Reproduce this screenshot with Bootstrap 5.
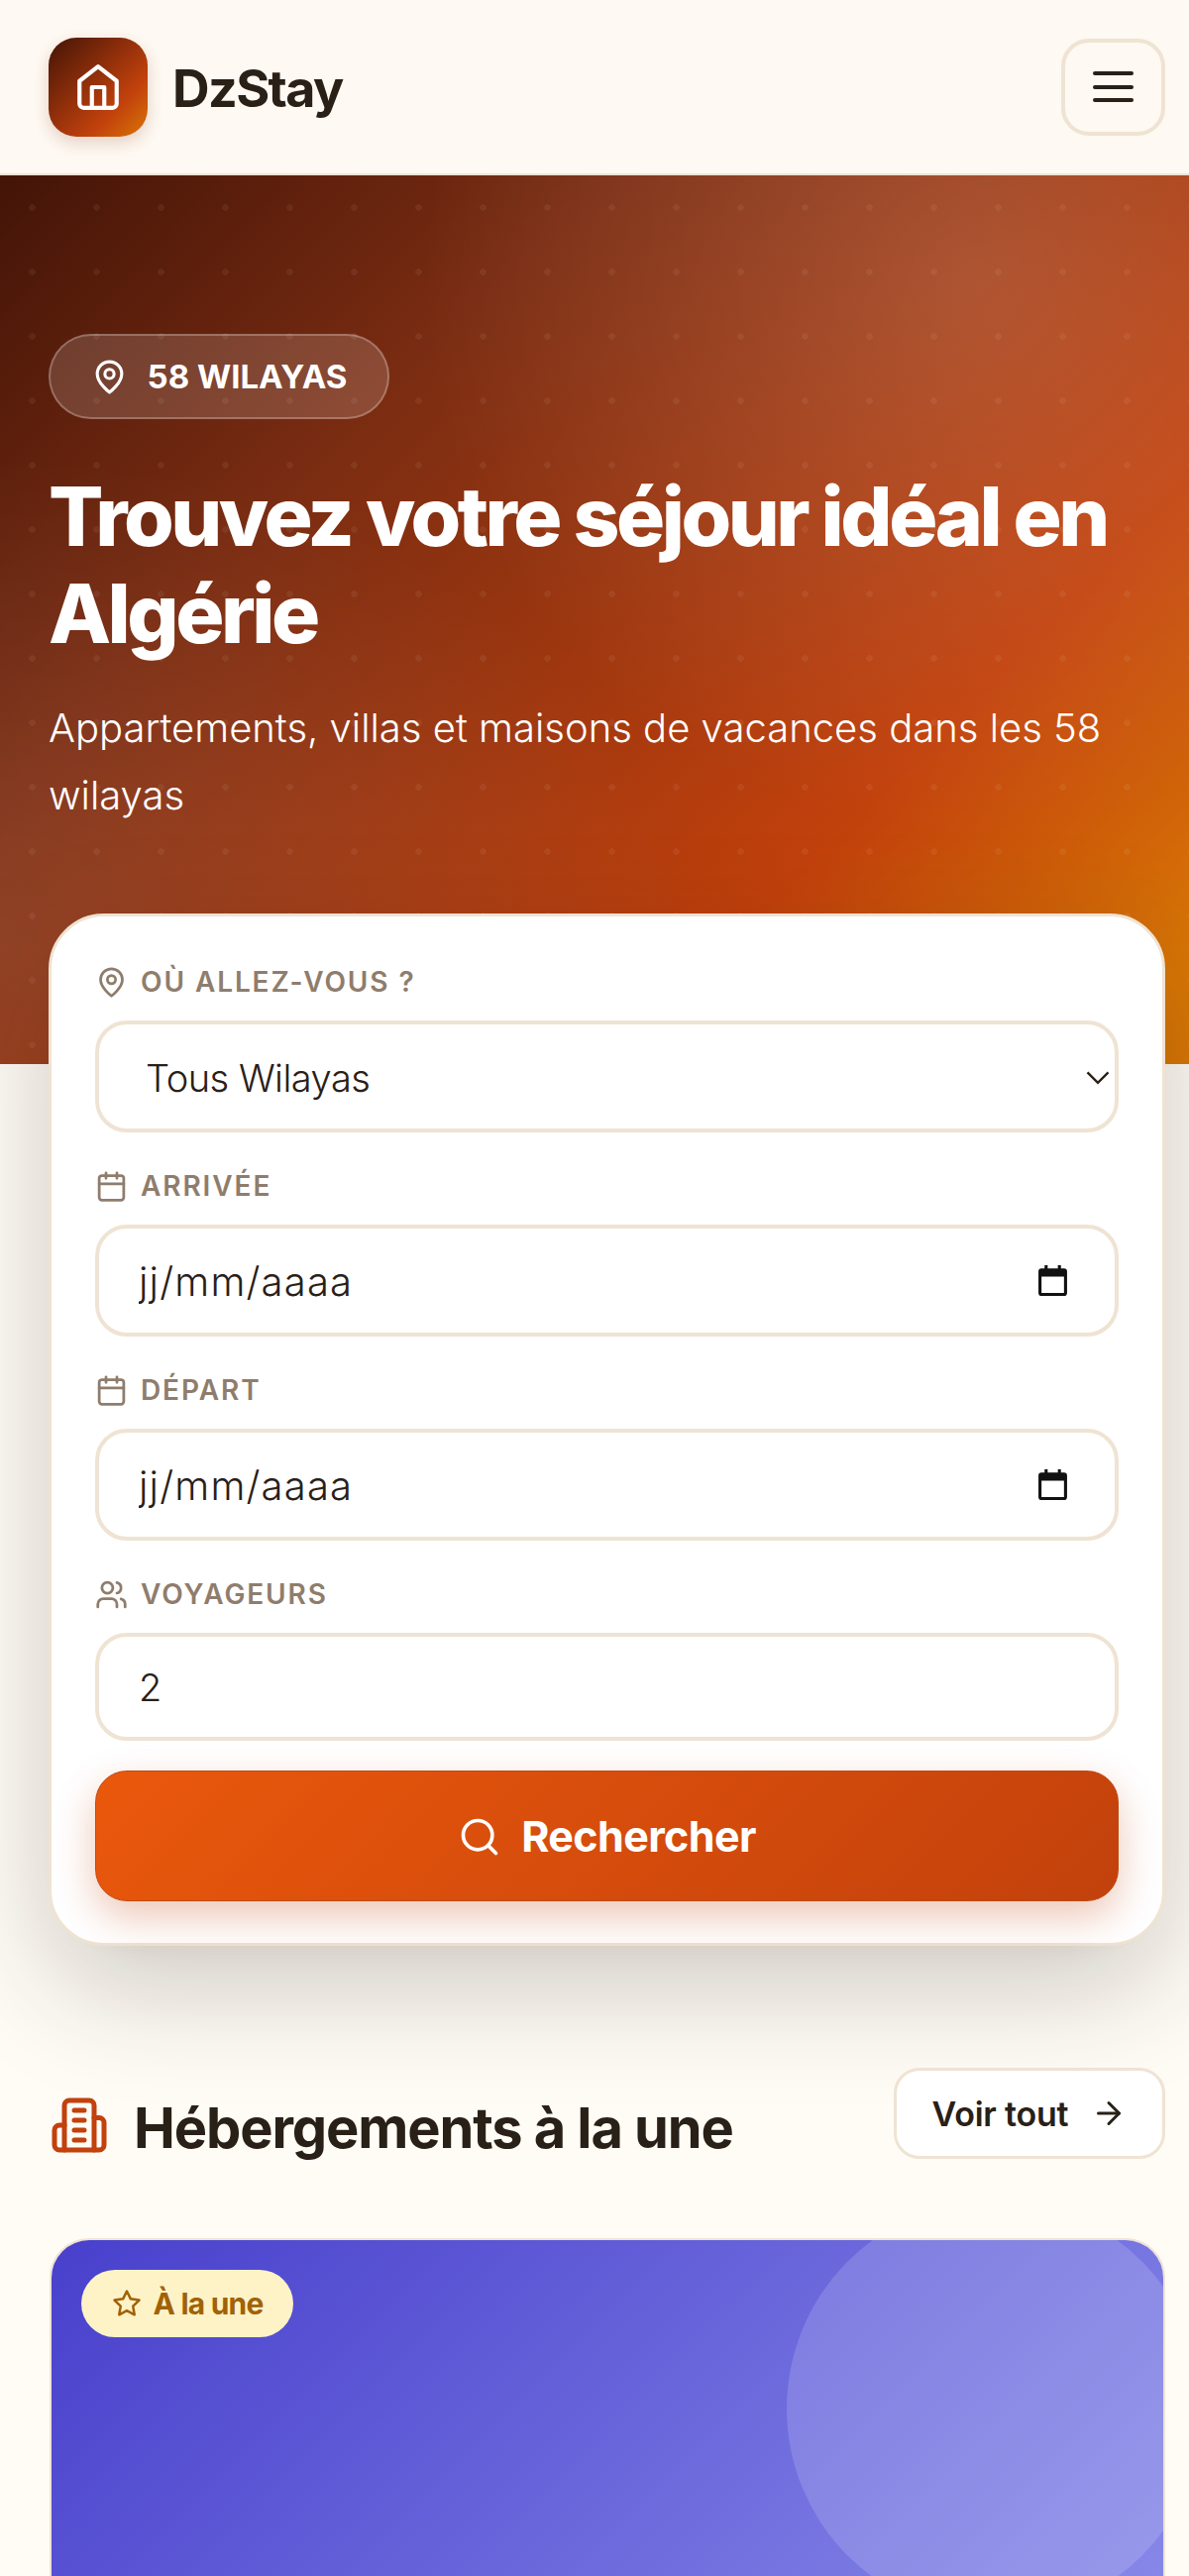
<!DOCTYPE html>
<html lang="fr">
  <head>
    <meta charset="UTF-8" />
    <meta name="viewport" content="width=device-width, initial-scale=1.0" />
    <title>DzStay</title>
    <link
      href="https://cdn.jsdelivr.net/npm/bootstrap@5.3.5/dist/css/bootstrap.min.css"
      rel="stylesheet"
    />
    <style>
      body {
        background: #fffcf6;
        color: #292017;
        font-family: "Inter", "Liberation Sans", sans-serif;
      }

      .page-clip {
        height: 2600px;
        overflow: hidden;
      }

      .top-bar {
        background: #fef9f2;
        border-bottom: 2px solid #efe3d3;
        height: 177px;
        padding: 0 24px 0 49px;
      }

      .logo-box {
        width: 100px;
        height: 100px;
        border-radius: 28px;
        background: linear-gradient(135deg, #431407 0%, #c2410c 70%, #d97706 100%);
        box-shadow: 0 6px 16px rgba(124, 45, 18, 0.2);
      }

      .logo-name {
        font-size: 52px;
        font-weight: 700;
        letter-spacing: -1.6px;
        margin: 4px 0 0 25px;
      }

      .menu-btn {
        width: 105px;
        height: 98px;
        border: 4px solid #efe3d3;
        border-radius: 28px;
        background: transparent;
        gap: 9.5px;
      }

      .menu-line {
        width: 41px;
        height: 4px;
        border-radius: 3px;
        background: #292017;
      }

      .hero-band {
        height: 897px;
        padding: 160px 24px 0 49px;
        color: #fff;
        background-image: radial-gradient(circle at 32.5px 32.5px, rgba(255, 255, 255, 0.06) 3px, transparent 3.5px),
          radial-gradient(ellipse 560px 560px at 983px 106px, rgba(255, 255, 255, 0.15), transparent),
          radial-gradient(ellipse 700px 500px at 0 780px, rgba(255, 255, 255, 0.09), transparent),
          linear-gradient(135deg, #431407 0%, #7c2d12 30%, #c2410c 72%, #d97706 95%);
        background-size: 65px 65px, auto, auto, auto;
      }

      .area-pill {
        width: 344px;
        height: 86px;
        border-radius: 43px;
        background: rgba(255, 255, 255, 0.15);
        border: 2px solid rgba(255, 255, 255, 0.25);
        font-size: 33px;
        font-weight: 700;
        gap: 20px;
      }

      .area-pill span {
        padding-top: 2px;
      }

      .hero-title {
        font-size: 82px;
        font-weight: 800;
        line-height: 98px;
        letter-spacing: -3.5px;
        margin: 50px 0 0;
      }

      .hero-sub {
        font-size: 40px;
        font-weight: 300;
        line-height: 68px;
        margin: 32px 0 0;
      }

      .search-box {
        margin: -152px 24px 0 49px;
        height: 1042px;
        position: relative;
        background: #fff;
        border: 3px solid #efe3d3;
        border-radius: 56px;
        padding: 51px 44px 0;
        box-shadow: 0 40px 120px rgba(30, 20, 10, 0.22);
      }

      .field-label {
        color: #8f7d6c;
        font-size: 28px;
        font-weight: 600;
        letter-spacing: 1.9px;
        height: 30px;
        margin-bottom: 24px;
        gap: 13px;
      }

      .field-input.form-control,
      .field-input.form-select {
        height: 113px;
        border: 4px solid #efe3d3;
        border-radius: 32px;
        font-size: 38px;
        font-weight: 300;
        color: #292017;
        padding: 0 40px;
        letter-spacing: -0.5px;
        margin-bottom: 39px;
      }

      .field-input.form-select {
        padding: 3px 40px 0 47px;
        background-image: url("data:image/svg+xml,%3Csvg xmlns='http://www.w3.org/2000/svg' viewBox='0 0 24 24' fill='none' stroke='%23292017' stroke-width='2'%3E%3Cpath d='m3 8 9 9 9-9'/%3E%3C/svg%3E");
        background-position: right 3px center;
        background-size: 28px 28px;
      }

      .field-input.date-field {
        padding: 2px 40px 0;
        font-size: 40px;
        letter-spacing: 1.2px;
        background: #fff url("data:image/svg+xml,%3Csvg xmlns='http://www.w3.org/2000/svg' viewBox='0 0 32 32'%3E%3Cpath fill='%23111' fill-rule='evenodd' d='M8 1h3v3h10V1h3v3h3a3 3 0 0 1 3 3v21a3 3 0 0 1-3 3H5a3 3 0 0 1-3-3V7a3 3 0 0 1 3-3h3zM5 12v16h22V12z'/%3E%3C/svg%3E") no-repeat right 46px center / 33px 33px;
      }

      .field-input.guest-field {
        height: 109px;
        margin-bottom: 30px;
      }

      .go-btn {
        height: 132px;
        width: 100%;
        padding-top: 2px;
        border: 1px solid #bf4a12;
        border-radius: 32px;
        color: #fff;
        font-size: 43px;
        font-weight: 700;
        letter-spacing: -0.6px;
        gap: 20px;
        background: linear-gradient(135deg, #ea580c, #c2410c);
        box-shadow: 0 16px 40px rgba(194, 65, 12, 0.3);
      }

      .section-head {
        height: 92px;
        padding: 0 24px 0 50px;
        margin-top: 123px;
        position: relative;
      }

      .title-wrap {
        padding-top: 20px;
      }

      .section-title {
        font-size: 56px;
        font-weight: 700;
        letter-spacing: -1.1px;
        margin: 0 0 0 25px;
        padding-top: 8px;
      }

      .see-all {
        width: 274px;
        height: 92px;
        border: 3px solid #efe3d3;
        border-radius: 26px;
        background: #fff;
        color: #292017;
        font-size: 34px;
        font-weight: 600;
        letter-spacing: -0.2px;
        gap: 23px;
      }

      .stay-card {
        margin: 80px 24px 0 50px;
        border: 2px solid #efe3d3;
        border-radius: 40px;
        overflow: hidden;
      }

      .stay-photo {
        height: 440px;
        position: relative;
        overflow: hidden;
        background: linear-gradient(135deg, #4840cc, #8a8cea);
      }

      .stay-photo::after {
        content: "";
        position: absolute;
        top: -40px;
        right: -40px;
        width: 420px;
        height: 420px;
        border-radius: 50%;
        background: rgba(255, 255, 255, 0.15);
      }

      .star-tag {
        position: absolute;
        z-index: 1;
        top: 30px;
        left: 30px;
        width: 214px;
        height: 68px;
        border-radius: 34px;
        background: #fef3c7;
        color: #a16207;
        font-size: 30px;
        font-weight: 700;
        letter-spacing: -0.8px;
        gap: 12px;
      }
    </style>
  </head>

  <body>
    <div class="page-clip">
      <nav class="top-bar d-flex align-items-center justify-content-between">
        <a class="d-flex align-items-center text-decoration-none text-reset" href="#">
          <span class="logo-box d-flex align-items-center justify-content-center">
            <svg width="50" height="50" viewBox="0 0 24 24" fill="none" stroke="#fff" stroke-width="2" stroke-linecap="round" stroke-linejoin="round"><path d="m3 9 9-7 9 7v11a2 2 0 0 1-2 2H5a2 2 0 0 1-2-2z"/><polyline points="9 22 9 12 15 12 15 22"/></svg>
          </span>
          <span class="logo-name">DzStay</span>
        </a>
        <button class="menu-btn d-flex flex-column align-items-center justify-content-center" type="button" aria-label="Menu">
          <span class="menu-line"></span>
          <span class="menu-line"></span>
          <span class="menu-line"></span>
        </button>
      </nav>

      <header class="hero-band">
        <div class="area-pill d-inline-flex align-items-center justify-content-center">
          <svg width="37" height="37" viewBox="0 0 24 24" fill="none" stroke="#fff" stroke-width="2" stroke-linecap="round" stroke-linejoin="round"><path d="M20 10c0 6-8 12-8 12s-8-6-8-12a8 8 0 0 1 16 0Z"/><circle cx="12" cy="10" r="3"/></svg>
          <span>58 WILAYAS</span>
        </div>
        <h1 class="hero-title">Trouvez votre séjour idéal en Algérie</h1>
        <p class="hero-sub">Appartements, villas et maisons de vacances dans les 58 wilayas</p>
      </header>

      <form class="search-box">
        <label class="field-label d-flex align-items-center">
          <svg width="33" height="33" viewBox="0 0 24 24" fill="none" stroke="currentColor" stroke-width="2" stroke-linecap="round" stroke-linejoin="round"><path d="M20 10c0 6-8 12-8 12s-8-6-8-12a8 8 0 0 1 16 0Z"/><circle cx="12" cy="10" r="3"/></svg>
          OÙ ALLEZ-VOUS ?
        </label>
        <select class="form-select field-input">
          <option>Tous Wilayas</option>
        </select>
        <label class="field-label d-flex align-items-center">
          <svg width="33" height="33" viewBox="0 0 24 24" fill="none" stroke="currentColor" stroke-width="2" stroke-linecap="round" stroke-linejoin="round"><rect x="3" y="4" width="18" height="18" rx="2"/><path d="M16 2v4M8 2v4M3 10h18"/></svg>
          ARRIVÉE
        </label>
        <input class="form-control field-input date-field" type="text" value="jj/mm/aaaa" />
        <label class="field-label d-flex align-items-center">
          <svg width="33" height="33" viewBox="0 0 24 24" fill="none" stroke="currentColor" stroke-width="2" stroke-linecap="round" stroke-linejoin="round"><rect x="3" y="4" width="18" height="18" rx="2"/><path d="M16 2v4M8 2v4M3 10h18"/></svg>
          DÉPART
        </label>
        <input class="form-control field-input date-field" type="text" value="jj/mm/aaaa" />
        <label class="field-label d-flex align-items-center">
          <svg width="33" height="33" viewBox="0 0 24 24" fill="none" stroke="currentColor" stroke-width="2" stroke-linecap="round" stroke-linejoin="round"><path d="M16 21v-2a4 4 0 0 0-4-4H6a4 4 0 0 0-4 4v2"/><circle cx="9" cy="7" r="4"/><path d="M22 21v-2a4 4 0 0 0-3-3.87"/><path d="M16 3.13a4 4 0 0 1 0 7.75"/></svg>
          VOYAGEURS
        </label>
        <input class="form-control field-input guest-field" type="number" value="2" />
        <button class="go-btn d-flex align-items-center justify-content-center" type="button">
          <svg width="44" height="44" viewBox="0 0 24 24" fill="none" stroke="#fff" stroke-width="2" stroke-linecap="round" stroke-linejoin="round"><circle cx="11" cy="11" r="8"/><path d="m21 21-4.3-4.3"/></svg>
          Rechercher
        </button>
      </form>

      <section class="section-head d-flex align-items-start justify-content-between">
        <div class="title-wrap d-flex align-items-center">
          <svg width="60" height="60" viewBox="0 0 24 24" fill="none" stroke="#c2410c" stroke-width="2" stroke-linecap="round" stroke-linejoin="round"><path d="M6 22V4a2 2 0 0 1 2-2h8a2 2 0 0 1 2 2v18Z"/><path d="M6 12H4a2 2 0 0 0-2 2v6a2 2 0 0 0 2 2h2"/><path d="M18 9h2a2 2 0 0 1 2 2v9a2 2 0 0 1-2 2h-2"/><path d="M10 6h4M10 10h4M10 14h4M10 18h4"/></svg>
          <h2 class="section-title">Hébergements à la une</h2>
        </div>
        <a class="see-all d-flex align-items-center justify-content-center text-decoration-none" href="#">
          Voir tout
          <svg width="36" height="36" viewBox="0 0 24 24" fill="none" stroke="currentColor" stroke-width="2" stroke-linecap="round" stroke-linejoin="round"><path d="M5 12h14"/><path d="m12 5 7 7-7 7"/></svg>
        </a>
      </section>

      <article class="stay-card">
        <div class="stay-photo">
          <span class="star-tag d-flex align-items-center justify-content-center">
            <svg width="30" height="30" viewBox="0 0 24 24" fill="none" stroke="currentColor" stroke-width="2" stroke-linecap="round" stroke-linejoin="round"><polygon points="12 2 15.09 8.26 22 9.27 17 14.14 18.18 21.02 12 17.77 5.82 21.02 7 14.14 2 9.27 8.91 8.26 12 2"/></svg>
            À la une
          </span>
        </div>
      </article>
    </div>

    <script src="https://cdn.jsdelivr.net/npm/bootstrap@5.3.5/dist/js/bootstrap.bundle.min.js"></script>
  </body>
</html>
